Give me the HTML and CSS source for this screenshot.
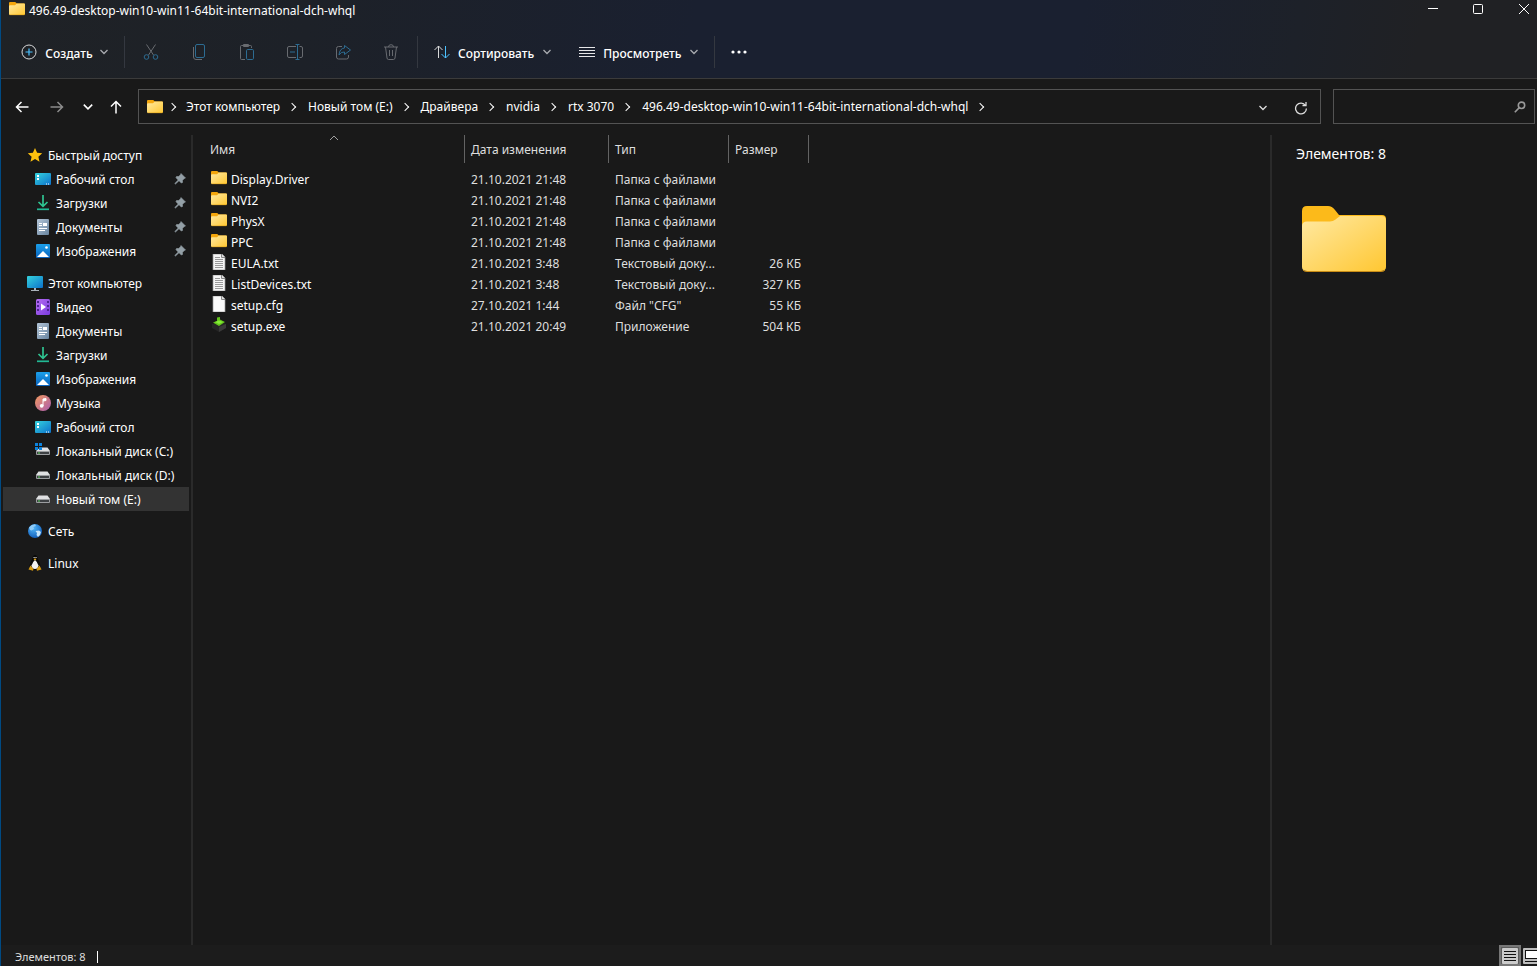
FILE: index.html
```html
<!DOCTYPE html>
<html lang="ru">
<head>
<meta charset="utf-8">
<title>496.49-desktop-win10-win11-64bit-international-dch-whql</title>
<link rel="stylesheet" href="styles.css">
</head>
<body>
<svg class="sprite" width="0" height="0" aria-hidden="true">
  <defs>
    <linearGradient id="gFolder" x1="0" y1="0" x2="1" y2="1"><stop offset="0" stop-color="#ffe9a2"/><stop offset="1" stop-color="#ffc732"/></linearGradient>
    <linearGradient id="gScreen" x1="0" y1="0" x2="1" y2="1"><stop offset="0" stop-color="#35d3dd"/><stop offset="1" stop-color="#0c71cb"/></linearGradient>
    <linearGradient id="gDoc" x1="0" y1="0" x2="1" y2="1"><stop offset="0" stop-color="#b4c6d8"/><stop offset="1" stop-color="#68849f"/></linearGradient>
    <linearGradient id="gPic" x1="0" y1="0" x2="0" y2="1"><stop offset="0" stop-color="#1ba0ea"/><stop offset="1" stop-color="#0a62bd"/></linearGradient>
    <linearGradient id="gVideo" x1="0" y1="0" x2="1" y2="1"><stop offset="0" stop-color="#b56cf0"/><stop offset="1" stop-color="#7a3ce0"/></linearGradient>
    <linearGradient id="gMusic" x1="0" y1="0" x2="1" y2="1"><stop offset="0" stop-color="#f39a5e"/><stop offset="1" stop-color="#a95cb0"/></linearGradient>
    <radialGradient id="gGlobe" cx=".4" cy=".3" r=".8"><stop offset="0" stop-color="#4fb4f7"/><stop offset="1" stop-color="#0b55b5"/></radialGradient>
  </defs>
  <symbol id="folder" viewBox="0 0 16 16"><path d="M0 2Q0 1 1 1H6.200L8 2.500H15Q16 2.500 16 3.500V5H0Z" fill="#f4a60c"/><path d="M0 5.200Q0 4.200 1 4.200H6L7.800 2.600H15Q16 2.600 16 3.600V13Q16 14 15 14H1Q0 14 0 13Z" fill="url(#gFolder)"/><path d="M.6 13.800H15.400" stroke="#d9990f" stroke-width=".5"/></symbol>
  <symbol id="folder-large" viewBox="0 0 84 66"><path d="M0 5Q0 0 5 0H26Q30 0 33 4L37 9H80Q84 9 84 13V30H0Z" fill="#fcba1a"/><path d="M0 20Q0 15.500 5 15.500H28Q31 15.500 33.500 13.500L38 10H79Q84 10 84 15V61Q84 65 79 65H5Q0 65 0 61Z" fill="url(#gFolder)"/><path d="M1 64Q2 65.500 5 65.500H79Q82 65.500 83 64" fill="none" stroke="#ca8d16"/></symbol>
  <symbol id="star" viewBox="0 0 16 16"><path d="M8 1L10.100 5.700 15.200 6.200 11.400 9.700 12.500 14.800 8 12.100 3.500 14.800 4.600 9.700.8 6.200 5.900 5.700Z" fill="#ffc20e"/></symbol>
  <symbol id="desktop" viewBox="0 0 16 16"><rect y="2" width="16" height="12" rx="1" fill="url(#gScreen)"/><path d="M2 4h2v2H2zM2 7h2v2H2z" fill="#fff"/><path d="M11 13h1M13 13h1" stroke="#fff"/></symbol>
  <symbol id="downloads" viewBox="0 0 16 16"><path d="M8 0V11M3.500 7L8 11.300 12.500 7" fill="none" stroke="#2fc391" stroke-width="1.700"/><path d="M2 14.300H14" stroke="#21b894" stroke-width="1.700"/></symbol>
  <symbol id="documents" viewBox="0 0 16 16"><rect x="2" width="12" height="16" rx="1" fill="url(#gDoc)"/><path d="M4 4.500H7M4 6.500H7M4 9.500H12M4 11.500H10" stroke="#fff"/><path d="M8 4h4v3H8z" fill="#fff"/></symbol>
  <symbol id="pictures" viewBox="0 0 16 16"><rect x="1" y="1" width="14" height="14" rx="1" fill="url(#gPic)"/><path d="M2 14L8 8 14 14Z" fill="#fff"/><circle cx="11.500" cy="4.500" r="1.300" fill="#fff"/></symbol>
  <symbol id="computer" viewBox="0 0 16 16"><rect y="1" width="16" height="12" rx="1" fill="url(#gScreen)"/><path d="M7 13h2v2h3v1H4v-1h3Z" fill="#aab3bb"/></symbol>
  <symbol id="video" viewBox="0 0 16 16"><rect x="1" width="14" height="16" rx="1.500" fill="url(#gVideo)"/><path d="M2 2h2v2H2zM2 6h2v2H2zM2 10h2v2H2zM12 2h2v2h-2zM12 6h2v2h-2zM12 10h2v2h-2z" fill="#4d2491"/><path d="M6 4.500L11 8 6 11.500Z" fill="#fff"/></symbol>
  <symbol id="music" viewBox="0 0 16 16"><circle cx="8" cy="8" r="8" fill="url(#gMusic)"/><circle cx="6.700" cy="10.800" r="1.900" fill="#fff"/><path d="M8 11V4L11 3.500V5.500L8 6" fill="#fff" stroke="#fff" stroke-width="1"/></symbol>
  <symbol id="drive" viewBox="0 0 16 16"><path d="M3.500 4.500H12.500L15 8H1Z" fill="#dfe0e2"/><path d="M1 8H15V11Q15 12 14 12H2Q1 12 1 11Z" fill="#9b9da0"/><path d="M2 9H14V11H2Z" fill="#3d4043"/><path d="M3 10H5" stroke="#5dd35d"/></symbol>
  <symbol id="system-drive" viewBox="0 0 16 16"><path d="M5 4.500H12.500L15 8H1Z" fill="#dfe0e2"/><path d="M1 8H15V11Q15 12 14 12H2Q1 12 1 11Z" fill="#9b9da0"/><path d="M2 9H14V11H2Z" fill="#3d4043"/><path d="M3 10H5" stroke="#5dd35d"/><path d="M0 0h3v3H0zM4 0h3v3H4zM0 4h3v3H0zM4 4h3v3H4z" fill="#0d83dd"/></symbol>
  <symbol id="network" viewBox="0 0 16 16"><circle cx="8" cy="8" r="7" fill="url(#gGlobe)"/><path d="M2 4.500Q4 1.500 8 1.200L9 3 6.500 4 7 6 4.500 7.500 3 7Z" fill="#8fcbf7"/><path d="M8.500 8L12 7.500 14 9Q13.500 12.500 11 14L9.500 12 10 10Z" fill="#c4e4fb"/></symbol>
  <symbol id="linux" viewBox="0 0 16 16"><path d="M8 0Q10.500 0 10.500 3.500 13 7 13.500 11L12 15H4L2.500 11Q3 7 5.500 3.500 5.500 0 8 0Z" fill="#090909"/><path d="M8 5Q10.500 7 11.500 10.500 11 14 8 14 5 14 4.500 10.500 5.500 7 8 5Z" fill="#f2f2f2"/><path d="M6.500 4L8 3.400 9.500 4 8 5.500Z" fill="#f1ae16"/><path d="M6.600 2.500h1M8.500 2.500h1" stroke="#fff"/><path d="M3.500 10.500L6.500 14 6 15.700 1.500 14.500ZM12.500 10.500L9.500 14 10 15.700 14.500 14.500Z" fill="#d59a13"/></symbol>
  <symbol id="pin" viewBox="0 0 12 12"><path d="M7 .5L11.500 5 10.300 5.500 8.500 7.300 8.500 9.500 7.300 10 5 7.700 1.500 11 .8 10.500 4.200 7 2 4.700 2.500 3.500H4.700L6.500 1.700Z" fill="#939fa6" stroke="#939fa6" stroke-width=".6"/></symbol>
  <symbol id="text-file" viewBox="0 0 16 16"><path d="M2 0H11L14 3V16H2Z" fill="#f5f5f5" stroke="#999" stroke-width=".7"/><path d="M4 3.500H9M4 5.500H12M4 7.500H12M4 9.500H12M4 11.500H12M4 13.500H12" stroke="#999"/><path d="M10.500 0V3.500H14" fill="#ddd" stroke="#888"/></symbol>
  <symbol id="blank-file" viewBox="0 0 16 16"><path d="M2 0H11L14 3V16H2Z" fill="#fafafa" stroke="#999" stroke-width=".7"/><path d="M10.500 0V3.500H14" fill="#ddd" stroke="#888"/></symbol>
  <symbol id="installer" viewBox="0 0 16 16"><path d="M1 7L8 5 15 7V11L8 15 1 11Z" fill="#262626"/><path d="M8 10L15 7V11L8 15Z" fill="#3a3a3a"/><path d="M6 .5L9 0V2.500L14 5 8 9 2 5.500 6 4Z" fill="#63c51c"/><path d="M4 5L8 3.500 12 5 8 7Z" fill="#86ed38"/></symbol>
  <symbol id="chev-down" viewBox="0 0 10 10"><path d="M1.500 3L5 6.500 8.500 3" fill="none" stroke="currentColor" stroke-width="1.300"/></symbol>
  <symbol id="back" viewBox="0 0 14 14"><path d="M13.500 7H1.500M6.500 2L1.500 7 6.500 12" fill="none" stroke="currentColor" stroke-width="1.500"/></symbol>
</svg>

<div class="window">
  <header class="top">
    <div class="titlebar">
      <svg class="ico"><use href="#folder"/></svg>
      <h1 class="title">496.49-desktop-win10-win11-64bit-international-dch-whql</h1>
      <button class="caption" aria-label="Свернуть"><svg width="10" height="10"><path d="M0 4.500H10" stroke="#fff"/></svg></button>
      <button class="caption" aria-label="Развернуть"><svg width="10" height="10"><rect x=".5" y=".5" width="9" height="9" rx="1" fill="none" stroke="#fff"/></svg></button>
      <button class="caption caption-close" aria-label="Закрыть"><svg width="10" height="10"><path d="M0 0L10 10M10 0L0 10" stroke="#fff"/></svg></button>
    </div>
    <div class="toolbar">
      <button class="command create">
        <svg class="ico"><circle cx="8" cy="8" r="7" fill="none" stroke="#d8d9da"/><path d="M8 4.500V11.500M4.500 8H11.500" stroke="#4cc2ff" stroke-width="1.200"/></svg>
        <span>Создать</span><svg class="chev"><use href="#chev-down"/></svg>
      </button>
      <div class="group">
        <button class="tool" aria-label="Вырезать" disabled><svg class="ico" fill="none"><path d="M3.500.5L10.500 11M12.500.5L5.500 11" stroke="#686b70"/><circle cx="3.500" cy="13" r="2.300" stroke="#2d6c92"/><circle cx="12.500" cy="13" r="2.300" stroke="#2d6c92"/></svg></button>
        <button class="tool" aria-label="Копировать" disabled><svg class="ico" fill="none"><path d="M2.500 3V13Q2.500 15.500 5 15.500H11" stroke="#686b70"/><rect x="4.500" y=".5" width="9" height="13" rx="1.500" stroke="#2d6c92"/></svg></button>
        <button class="tool" aria-label="Вставить" disabled><svg class="ico" fill="none"><path d="M6 15.500H2.500Q1.500 15.500 1.500 14.500V2.500Q1.500 1.500 2.500 1.500H11.500Q12.500 1.500 12.500 2.500V4M4.500 1.500V.5H9.500V2.500H4.500Z" stroke="#686b70"/><rect x="7.500" y="5.500" width="7" height="10" rx="1.200" stroke="#2d6c92"/></svg></button>
        <button class="tool" aria-label="Переименовать" disabled><svg class="ico" fill="none"><path d="M9 2.500H2Q.5 2.500.5 4V12Q.5 13.500 2 13.500H9M12.500 2.500H14Q15.500 2.500 15.500 4V12Q15.500 13.500 14 13.500H12.500" stroke="#686b70"/><path d="M10.500.5V15.500M8.500.5H12.500M8.500 15.500H12.500M3 8H8" stroke="#2d6c92"/></svg></button>
        <button class="tool" aria-label="Поделиться" disabled><svg class="ico" fill="none"><path d="M7 2.500H3.500Q1.500 2.500 1.500 4.500V13Q1.500 15 3.500 15H11.500Q13.500 15 13.500 13V11" stroke="#686b70"/><path d="M9.500 4V1.500L15.500 6 9.500 10.500V8Q6 7.500 4 11 4.500 4.500 9.500 4Z" stroke="#2d6c92"/></svg></button>
        <button class="tool" aria-label="Удалить" disabled><svg class="ico" fill="none"><path d="M1 3H15M5.500 3Q5.500.7 8 .7T10.500 3M2.500 3L4 14Q4.200 15.500 5.500 15.500H10.500Q11.800 15.500 12 14L13.500 3M6.500 6V12M9.500 6V12" stroke="#686b70"/></svg></button>
      </div>
      <div class="group group-views">
        <button class="command">
          <svg class="ico" fill="none"><path d="M4.500 14V2M.5 6L4.500 2 8.500 6" stroke="#d8d9da"/><path d="M11.500 2V14M7.500 10L11.500 14 15.500 10" stroke="#4cc2ff"/></svg>
          <span>Сортировать</span><svg class="chev"><use href="#chev-down"/></svg>
        </button>
        <button class="command">
          <svg class="ico"><path d="M0 3.500H16M0 6.500H16M0 9.500H16M0 12.500H16" stroke="#e6e6e8"/></svg>
          <span>Просмотреть</span><svg class="chev"><use href="#chev-down"/></svg>
        </button>
      </div>
      <button class="command more" aria-label="Дополнительно"><svg class="ico" fill="#fff"><circle cx="2" cy="8" r="1.600"/><circle cx="8" cy="8" r="1.600"/><circle cx="14" cy="8" r="1.600"/></svg></button>
    </div>
  </header>

  <div class="navrow">
    <div class="history">
      <button aria-label="Назад"><svg class="arrow"><use href="#back"/></svg></button>
      <button class="dim" aria-label="Вперёд"><svg class="arrow flip"><use href="#back"/></svg></button>
      <button class="narrow" aria-label="Последние расположения"><svg class="chev-nav"><use href="#chev-down"/></svg></button>
      <button class="narrow" aria-label="Вверх"><svg class="arrow up"><use href="#back"/></svg></button>
    </div>
    <nav class="address" aria-label="Адрес">
      <svg class="ico"><use href="#folder"/></svg>
      <ol class="crumbs">
        <li></li>
        <li><a href="#">Этот компьютер</a></li>
        <li><a href="#">Новый том (E:)</a></li>
        <li><a href="#">Драйвера</a></li>
        <li><a href="#">nvidia</a></li>
        <li><a href="#">rtx 3070</a></li>
        <li><a href="#">496.49-desktop-win10-win11-64bit-international-dch-whql</a></li>
      </ol>
      <button class="addr-btn" aria-label="Предыдущие расположения"><svg class="chev-addr"><use href="#chev-down"/></svg></button>
      <button class="addr-btn" aria-label="Обновить"><svg width="14" height="14" viewBox="0 0 14 14" fill="none"><path d="M11.500 4.500A5.400 5.400 0 1 0 12.400 7.500M12 1V4.500H8.500" stroke="#ddd" stroke-width="1.300"/></svg></button>
    </nav>
    <div class="search">
      <input type="search" aria-label="Поиск">
      <svg width="12" height="12" viewBox="0 0 12 12" fill="none"><circle cx="7.500" cy="4.300" r="3.200" stroke="#999" stroke-width="1.600"/><path d="M5.300 6.600L.8 11.200" stroke="#999" stroke-width="1.600"/></svg>
    </div>
  </div>

  <div class="body">
    <nav class="sidebar" aria-label="Область навигации">
      <ul class="tree">
        <li class="root"><a href="#"><svg class="ico"><use href="#star"/></svg><span>Быстрый доступ</span></a></li>
        <li><a href="#"><svg class="ico"><use href="#desktop"/></svg><span>Рабочий стол</span><svg class="pin"><use href="#pin"/></svg></a></li>
        <li><a href="#"><svg class="ico"><use href="#downloads"/></svg><span>Загрузки</span><svg class="pin"><use href="#pin"/></svg></a></li>
        <li><a href="#"><svg class="ico"><use href="#documents"/></svg><span>Документы</span><svg class="pin"><use href="#pin"/></svg></a></li>
        <li><a href="#"><svg class="ico"><use href="#pictures"/></svg><span>Изображения</span><svg class="pin"><use href="#pin"/></svg></a></li>
      </ul>
      <ul class="tree">
        <li class="root"><a href="#"><svg class="ico"><use href="#computer"/></svg><span>Этот компьютер</span></a></li>
        <li><a href="#"><svg class="ico"><use href="#video"/></svg><span>Видео</span></a></li>
        <li><a href="#"><svg class="ico"><use href="#documents"/></svg><span>Документы</span></a></li>
        <li><a href="#"><svg class="ico"><use href="#downloads"/></svg><span>Загрузки</span></a></li>
        <li><a href="#"><svg class="ico"><use href="#pictures"/></svg><span>Изображения</span></a></li>
        <li><a href="#"><svg class="ico"><use href="#music"/></svg><span>Музыка</span></a></li>
        <li><a href="#"><svg class="ico"><use href="#desktop"/></svg><span>Рабочий стол</span></a></li>
        <li><a href="#"><svg class="ico"><use href="#system-drive"/></svg><span>Локальный диск (C:)</span></a></li>
        <li><a href="#"><svg class="ico"><use href="#drive"/></svg><span>Локальный диск (D:)</span></a></li>
        <li><a href="#" class="selected"><svg class="ico"><use href="#drive"/></svg><span>Новый том (E:)</span></a></li>
      </ul>
      <ul class="tree"><li class="root"><a href="#"><svg class="ico"><use href="#network"/></svg><span>Сеть</span></a></li></ul>
      <ul class="tree"><li class="root"><a href="#"><svg class="ico"><use href="#linux"/></svg><span>Linux</span></a></li></ul>
    </nav>

    <main class="files">
      <table class="list">
        <colgroup><col class="c-name"><col class="c-date"><col class="c-type"><col class="c-size"></colgroup>
        <thead>
          <tr><th scope="col">Имя<svg class="sort" viewBox="0 0 10 6"><path d="M1 5L5 1 9 5" fill="none" stroke="#a0a0a0"/></svg></th><th scope="col">Дата изменения</th><th scope="col">Тип</th><th scope="col">Размер</th></tr>
        </thead>
        <tbody>
          <tr><td><div class="name"><svg class="ico"><use href="#folder"/></svg>Display.Driver</div></td><td>21.10.2021 21:48</td><td>Папка с файлами</td><td></td></tr>
          <tr><td><div class="name"><svg class="ico"><use href="#folder"/></svg>NVI2</div></td><td>21.10.2021 21:48</td><td>Папка с файлами</td><td></td></tr>
          <tr><td><div class="name"><svg class="ico"><use href="#folder"/></svg>PhysX</div></td><td>21.10.2021 21:48</td><td>Папка с файлами</td><td></td></tr>
          <tr><td><div class="name"><svg class="ico"><use href="#folder"/></svg>PPC</div></td><td>21.10.2021 21:48</td><td>Папка с файлами</td><td></td></tr>
          <tr><td><div class="name"><svg class="ico"><use href="#text-file"/></svg>EULA.txt</div></td><td>21.10.2021 3:48</td><td>Текстовый доку...</td><td>26 КБ</td></tr>
          <tr><td><div class="name"><svg class="ico"><use href="#text-file"/></svg>ListDevices.txt</div></td><td>21.10.2021 3:48</td><td>Текстовый доку...</td><td>327 КБ</td></tr>
          <tr><td><div class="name"><svg class="ico"><use href="#blank-file"/></svg>setup.cfg</div></td><td>27.10.2021 1:44</td><td>Файл "CFG"</td><td>55 КБ</td></tr>
          <tr><td><div class="name"><svg class="ico"><use href="#installer"/></svg>setup.exe</div></td><td>21.10.2021 20:49</td><td>Приложение</td><td>504 КБ</td></tr>
        </tbody>
      </table>
    </main>

    <aside class="details">
      <p>Элементов: 8</p>
      <svg class="preview"><use href="#folder-large"/></svg>
    </aside>
  </div>

  <footer class="status">
    <span class="count">Элементов: 8</span>
    <div class="views">
      <button class="view active" aria-label="Таблица"><svg width="16" height="16"><rect width="16" height="16" rx="1" fill="#cbcbcb"/><path d="M2 3.500H14M2 6.500H14M2 9.500H14M2 12.500H14" stroke="#111"/></svg></button>
      <button class="view" aria-label="Крупные значки"><svg width="16" height="16"><rect width="16" height="16" rx="1" fill="#bdbdbd"/><rect x="2.500" y="2.500" width="14" height="8" fill="#fff" stroke="#111"/><path d="M2 13.500H16" stroke="#111"/></svg></button>
    </div>
  </footer>
</div>
</body>
</html>
```
FILE: styles.css
```css
* { box-sizing: border-box; }

body {
  margin: 0;
  background: #191919;
  color: #fff;
  font: 12px/16px "Noto Sans", "Open Sans", sans-serif;
}

button {
  display: flex;
  align-items: center;
  justify-content: center;
  padding: 0;
  border: 0;
  background: none;
  color: inherit;
  font: inherit;
}

a { color: inherit; text-decoration: none; }
ul, ol { margin: 0; padding: 0; list-style: none; }
svg { flex: none; }

.sprite { position: absolute; }
.ico { width: 16px; height: 16px; }
.chev { width: 10px; height: 10px; color: #a9abb0; }

.window {
  display: flex;
  flex-direction: column;
  height: 100vh;
  overflow: hidden;
  border-left: 1px solid #004a83;
}

/* Title bar and command bar */
.top {
  background: linear-gradient(100deg, #1f2226 0%, #1d2128 20%, #1a2030 45%, #1a2030 70%, #1d2129 84%, #202124 92%);
  border-bottom: 1px solid #3b3b3b;
}

.titlebar {
  display: flex;
  align-items: center;
  height: 18px;
  padding-left: 8px;
}

.title {
  flex: 1;
  margin: 0 0 0 4px;
  padding-top: 4px;
  font-size: 12px;
  font-weight: 400;
}

.caption { width: 45px; height: 18px; }
.caption-close { width: 37px; padding-left: 10px; }

.toolbar {
  display: flex;
  align-items: center;
  margin-top: 8px;
  height: 52px;
}

.command { height: 32px; font-size: 12px; font-weight: 500; }
.command .ico { margin-right: 8px; }
.command .chev { margin-left: 8px; }
.command span { padding-top: 4px; }
.create { width: 123px; padding-left: 5px; }
.create .chev { margin-left: 6px; }

.group {
  display: flex;
  align-items: center;
  height: 32px;
  border-left: 1px solid #343840;
}

.group:not(.group-views) { width: 293px; padding-left: 2px; }
.tool { width: 48px; height: 32px; }
.group-views { gap: 27px; padding: 0 15px 0 16px; border-right: 1px solid #343840; }
.more { padding-left: 16px; }

/* Navigation row */
.navrow {
  display: flex;
  flex: none;
  height: 56px;
  padding: 10px 2px 11px 0;
}

.history { display: flex; width: 137px; padding-left: 3px; }
.history button { width: 35px; }
.history .narrow { width: 28px; }
.arrow { width: 14px; height: 14px; }
.flip { transform: scaleX(-1); }
.up { transform: rotate(90deg); }
.dim { color: #8c8c8c; }
.chev-nav { width: 12px; height: 12px; }
.chev-addr { width: 10px; height: 10px; color: #ddd; }

.address {
  display: flex;
  flex: 1;
  align-items: center;
  min-width: 0;
  padding-left: 8px;
  border: 1px solid #535353;
}

.crumbs { display: flex; flex: 1; overflow: hidden; white-space: nowrap; }
.crumbs li { display: flex; align-items: center; }

.crumbs li::after {
  content: "";
  width: 5px;
  height: 5px;
  margin: 0 13px 0 9px;
  border: solid #fff;
  border-width: 1px 1px 0 0;
  transform: rotate(45deg);
}

.crumbs li:first-child::after { margin: 0 11px 0 6px; }

.addr-btn { width: 38px; height: 33px; padding-top: 2px; }

.search {
  display: flex;
  align-items: center;
  width: 202px;
  margin-left: 12px;
  padding-right: 8px;
  border: 1px solid #535353;
}

.search input {
  flex: 1;
  min-width: 0;
  height: 100%;
  border: 0;
  outline: 0;
  background: none;
  color: inherit;
  font: inherit;
}

/* Body columns */
.body { display: flex; flex: 1; min-height: 0; }

.sidebar {
  flex: none;
  width: 192px;
  padding: 8px 2px 0;
  border-right: 2px solid #2a2a2a;
}

.tree { margin-bottom: 8px; }

.tree a {
  display: flex;
  align-items: center;
  gap: 5px;
  height: 24px;
  padding: 0 3px 0 32px;
}

.tree span { padding-top: 2px; white-space: nowrap; }
.tree .root a { padding-left: 24px; }
.tree .selected { background: #333; }
.pin { width: 12px; height: 12px; margin-left: auto; }

.files { flex: 1; min-width: 0; padding-left: 11px; }

.list {
  width: 605px;
  table-layout: fixed;
  border-collapse: separate;
  border-spacing: 0;
  color: #dedede;
}

.c-name { width: 261px; }
.c-date { width: 144px; }
.c-type { width: 120px; }
.c-size { width: 80px; }

.list th {
  position: relative;
  height: 28px;
  padding: 2px 6px 0;
  border-right: 1px solid #636363;
  font-weight: 400;
  text-align: left;
}

.sort {
  position: absolute;
  top: 0;
  left: calc(50% - 5px);
  width: 10px;
  height: 6px;
}

.list tbody::before { content: ""; display: block; height: 6px; }
.list td { height: 21px; padding: 0 6px; line-height: 21px; white-space: nowrap; }
.list td:first-child { color: #fff; }
.list td:last-child { padding-right: 8px; text-align: right; }
.name { display: flex; gap: 4px; height: 21px; padding-left: 1px; }
.name .ico { margin-top: 1px; }

.details {
  flex: none;
  width: 267px;
  padding: 9px 24px;
  border-left: 2px solid #2a2a2a;
  font-size: 14px;
  line-height: 20px;
}

.details p { margin: 0; }
.preview { display: block; width: 84px; height: 66px; margin: 42px 6px 0; }

/* Status bar */
.status {
  display: flex;
  flex: none;
  align-items: center;
  justify-content: space-between;
  height: 21px;
  padding: 2px 0 0 14px;
  background: #1c1c1c;
  color: #dedede;
  font-size: 11px;
  line-height: 12px;
}

.count { padding-right: 11px; border-right: 1px solid #fff; }
.views { display: flex; gap: 2px; width: 38px; margin-top: -2px; overflow: hidden; }
.view { flex: none; width: 22px; height: 21px; justify-content: flex-start; }
.active { justify-content: center; border: 2px solid #777; background: #5c5c5c; }
```
